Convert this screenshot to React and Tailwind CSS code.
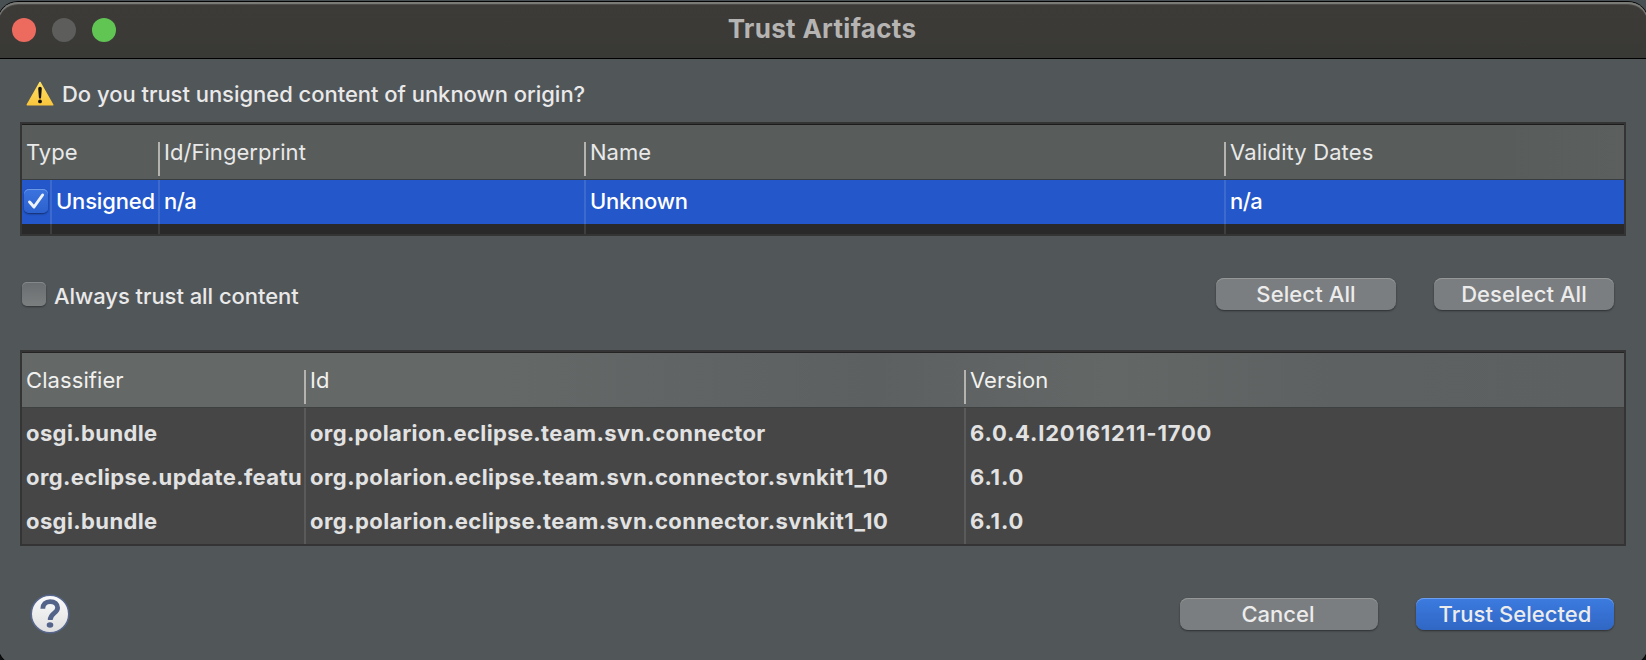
function Button({ className, children }) {
  return (
    <button
      className={`flex h-8 items-center justify-center rounded-[8px] font-[450] text-[#ececec] ${className}`}
    >
      {children}
    </button>
  );
}

const grayButton =
  "bg-[#7b7e80] shadow-[inset_0_1px_0_#959897,0_1px_2px_rgba(0,0,0,0.45)]";

function HeaderCell({ last, className = "", children }) {
  return (
    <div className="flex h-[54px] items-end justify-between">
      <span className={`flex h-full items-center pl-[4px] ${className}`}>{children}</span>
      {!last && <span className="mb-[3px] h-[34px] w-0.5 bg-[#b4b3b0]" />}
    </div>
  );
}

function WarningIcon() {
  return (
    <svg className="h-7 w-7" viewBox="0 0 28 28">
      <defs>
        <linearGradient id="warn" x1="0" y1="0" x2="0" y2="1">
          <stop offset="0" stopColor="#ffe066" />
          <stop offset="1" stopColor="#f8c63c" />
        </linearGradient>
      </defs>
      <path
        d="M14 2.4 L26.8 24.8 H1.2 Z"
        fill="url(#warn)"
        stroke="url(#warn)"
        strokeWidth="1.4"
        strokeLinejoin="round"
      />
      <path d="M12.2 8.6 a1.8 1.8 0 0 1 3.6 0 L15.1 17.6 a1.1 1.1 0 0 1 -2.2 0 Z" fill="#161208" />
      <circle cx="14" cy="21.4" r="1.9" fill="#161208" />
    </svg>
  );
}

function HelpIcon() {
  return (
    <svg className="h-10 w-10" viewBox="0 0 40 40">
      <defs>
        <linearGradient id="help" x1="0" y1="0" x2="0" y2="1">
          <stop offset="0" stopColor="#fbfbfb" />
          <stop offset="1" stopColor="#dfdfdf" />
        </linearGradient>
      </defs>
      <circle cx="20" cy="20" r="18.8" fill="url(#help)" stroke="#56668c" strokeWidth="1.6" />
      <path
        d="M12.8 14.8 C12.8 10.2 15.6 7.6 20.2 7.6 C24.8 7.6 27.6 10 27.6 13.8 C27.6 19.6 20.2 18.8 20.2 26"
        fill="none"
        stroke="#53638a"
        strokeWidth="4.8"
      />
      <ellipse cx="20" cy="31" rx="3.3" ry="2.8" fill="#53638a" />
    </svg>
  );
}

const artifacts = [
  ["osgi.bundle", "org.polarion.eclipse.team.svn.connector", "6.0.4.I20161211-1700"],
  ["org.eclipse.update.featu", "org.polarion.eclipse.team.svn.connector.svnkit1_10", "6.1.0"],
  ["osgi.bundle", "org.polarion.eclipse.team.svn.connector.svnkit1_10", "6.1.0"],
];

export default function App() {
  return (
    <div className="h-[660px] w-[1646px] overflow-hidden bg-linear-to-b from-[#485054] from-50% to-[#101112] to-50% pt-0.5 font-['Inter',sans-serif] text-[22px] leading-8 whitespace-nowrap text-[#e9e9e9]">
      <div className="-mx-0.5 flex h-[663px] flex-col rounded-[20px] bg-[#515659] shadow-[0_0_0_1px_#050505]">
        <header className="grid h-14 grid-cols-[1fr_auto_1fr] items-center rounded-t-[20px] bg-linear-to-b from-[#3d3b38] to-[#393936] px-3.5 shadow-[inset_0_2px_0_#7a7b77,inset_0_3px_0_#4b4a47]">
          <div className="flex gap-4">
            <span className="h-6 w-6 rounded-full bg-[#ed6a5e]" />
            <span className="h-6 w-6 rounded-full bg-[#5d5d5b]" />
            <span className="h-6 w-6 rounded-full bg-[#61c554]" />
          </div>
          <h1 className="pr-0.5 pb-0.5 text-[26px] font-bold tracking-[0.3px] text-[#b5b4b2]">Trust Artifacts</h1>
        </header>
        <div className="h-px bg-black" />
        <main className="px-[22px] pt-[19px]">
          <div className="flex h-8 items-center gap-2 pl-1.5">
            <WarningIcon />
            <p className="font-[450] tracking-[-0.03px]">Do you trust unsigned content of unknown origin?</p>
          </div>

          <section className="mt-3 h-[114px] w-[1606px] border-2 border-[#343434] bg-[#292929]">
            <div className="grid h-14 grid-cols-[138px_426px_640px_398px] border-t border-b border-t-[#1c1c1c] border-b-[#3a3d3d] bg-[#585d5c] bg-linear-to-r from-transparent from-92% to-[#5b5f5e]">
              <HeaderCell>Type</HeaderCell>
              <HeaderCell className="tracking-[0.05px]">Id/Fingerprint</HeaderCell>
              <HeaderCell>Name</HeaderCell>
              <HeaderCell last className="tracking-[0.12px]">Validity Dates</HeaderCell>
            </div>
            <div className="grid h-11 grid-cols-[30px_108px_426px_640px_398px] bg-[#2457ca] font-medium text-white">
              <div className="flex items-center border-r-2 border-[#3d6acf] pb-0.5 pl-0.5">
                <span className="flex h-6 w-6 shrink-0 items-center justify-center rounded-[5px] bg-linear-to-b from-[#3c74df] to-[#2c61cd] shadow-[inset_0_1px_0_#6d98e8,0_1px_2px_rgba(0,0,0,0.5)]">
                  <svg className="h-6 w-6" viewBox="0 0 24 24">
                    <path
                      d="M5.6 13 L10 18 L18.6 6"
                      fill="none"
                      stroke="#eef3ff"
                      strokeWidth="3"
                      strokeLinecap="round"
                      strokeLinejoin="round"
                    />
                  </svg>
                </span>
              </div>
              <div className="flex items-center border-r-2 border-[#3d6acf] pb-0.5 pl-1 tracking-[-0.18px]">Unsigned</div>
              <div className="flex items-center border-r-2 border-[#3d6acf] pb-0.5 pl-1 tracking-[-0.5px]">n/a</div>
              <div className="flex items-center border-r-2 border-[#3d6acf] pb-0.5 pl-1 tracking-[-0.25px]">Unknown</div>
              <div className="flex items-center pb-0.5 pl-1 tracking-[-0.5px]">n/a</div>
            </div>
            <div className="grid h-2.5 grid-cols-[30px_108px_426px_640px_398px]">
              <div className="border-r-2 border-[#3e3e3e]" />
              <div className="border-r-2 border-[#3e3e3e]" />
              <div className="border-r-2 border-[#3e3e3e]" />
              <div className="border-r-2 border-[#3e3e3e]" />
              <div />
            </div>
          </section>

          <div className="mt-[42px] flex h-8 items-center pr-3 pl-0.5">
            <span className="h-6 w-6 rounded-[5px] bg-linear-to-b from-[#6a6d6f] to-[#7c7f80] shadow-[inset_0_1px_0_#858889,0_1px_2px_rgba(0,0,0,0.4)]" />
            <span className="mt-1 ml-2 font-[450] tracking-[-0.05px]">Always trust all content</span>
            <div className="ml-auto flex gap-[38px]">
              <Button className={`${grayButton} w-[180px] tracking-[0.1px]`}>Select All</Button>
              <Button className={`${grayButton} w-[180px] tracking-[0.08px]`}>Deselect All</Button>
            </div>
          </div>

          <section className="mt-10 h-[196px] w-[1606px] border-2 border-[#343434] bg-[#464646]">
            <div className="grid h-14 grid-cols-[284px_660px_658px] border-t border-b border-t-[#242424] border-b-[#3f4141] bg-[linear-gradient(to_right,#646867_30%,#5c6061_53%,#636766_68%,#5d6161_82%,#5c6060)] text-[#f1f1ef]">
              <HeaderCell className="tracking-[0.08px]">Classifier</HeaderCell>
              <HeaderCell>Id</HeaderCell>
              <HeaderCell last>Version</HeaderCell>
            </div>
            <div className="grid h-[136px] grid-cols-[284px_660px_658px] font-bold text-[#e2e2e2]">
              <div className="border-r-2 border-[#5a5a5a] pt-[3px] pl-1 tracking-[0.4px]">
                {artifacts.map(([classifier], i) => (
                  <div key={i} className="h-11 leading-11">{classifier}</div>
                ))}
              </div>
              <div className="border-r-2 border-[#5a5a5a] pt-[3px] pl-1 tracking-[0.45px]">
                {artifacts.map(([, id], i) => (
                  <div key={i} className="h-11 leading-11 first:tracking-[0.36px]">{id}</div>
                ))}
              </div>
              <div className="pt-[3px] pl-1 tracking-[0.8px]">
                {artifacts.map(([, , version], i) => (
                  <div key={i} className="h-11 leading-11">{version}</div>
                ))}
              </div>
            </div>
          </section>

          <footer className="mt-12 flex h-10 items-center pl-2.5">
            <HelpIcon />
            <div className="mr-3 ml-auto flex gap-[38px]">
              <Button className={`${grayButton} w-[198px] pr-0.5`}>Cancel</Button>
              <Button className="w-[198px] bg-linear-to-b from-[#3c7be0] to-[#3067c4] tracking-[0.05px] shadow-[inset_0_1px_0_#6d9ff0,0_1px_2px_rgba(0,0,0,0.45)]">
                Trust Selected
              </Button>
            </div>
          </footer>
        </main>
      </div>
    </div>
  );
}
